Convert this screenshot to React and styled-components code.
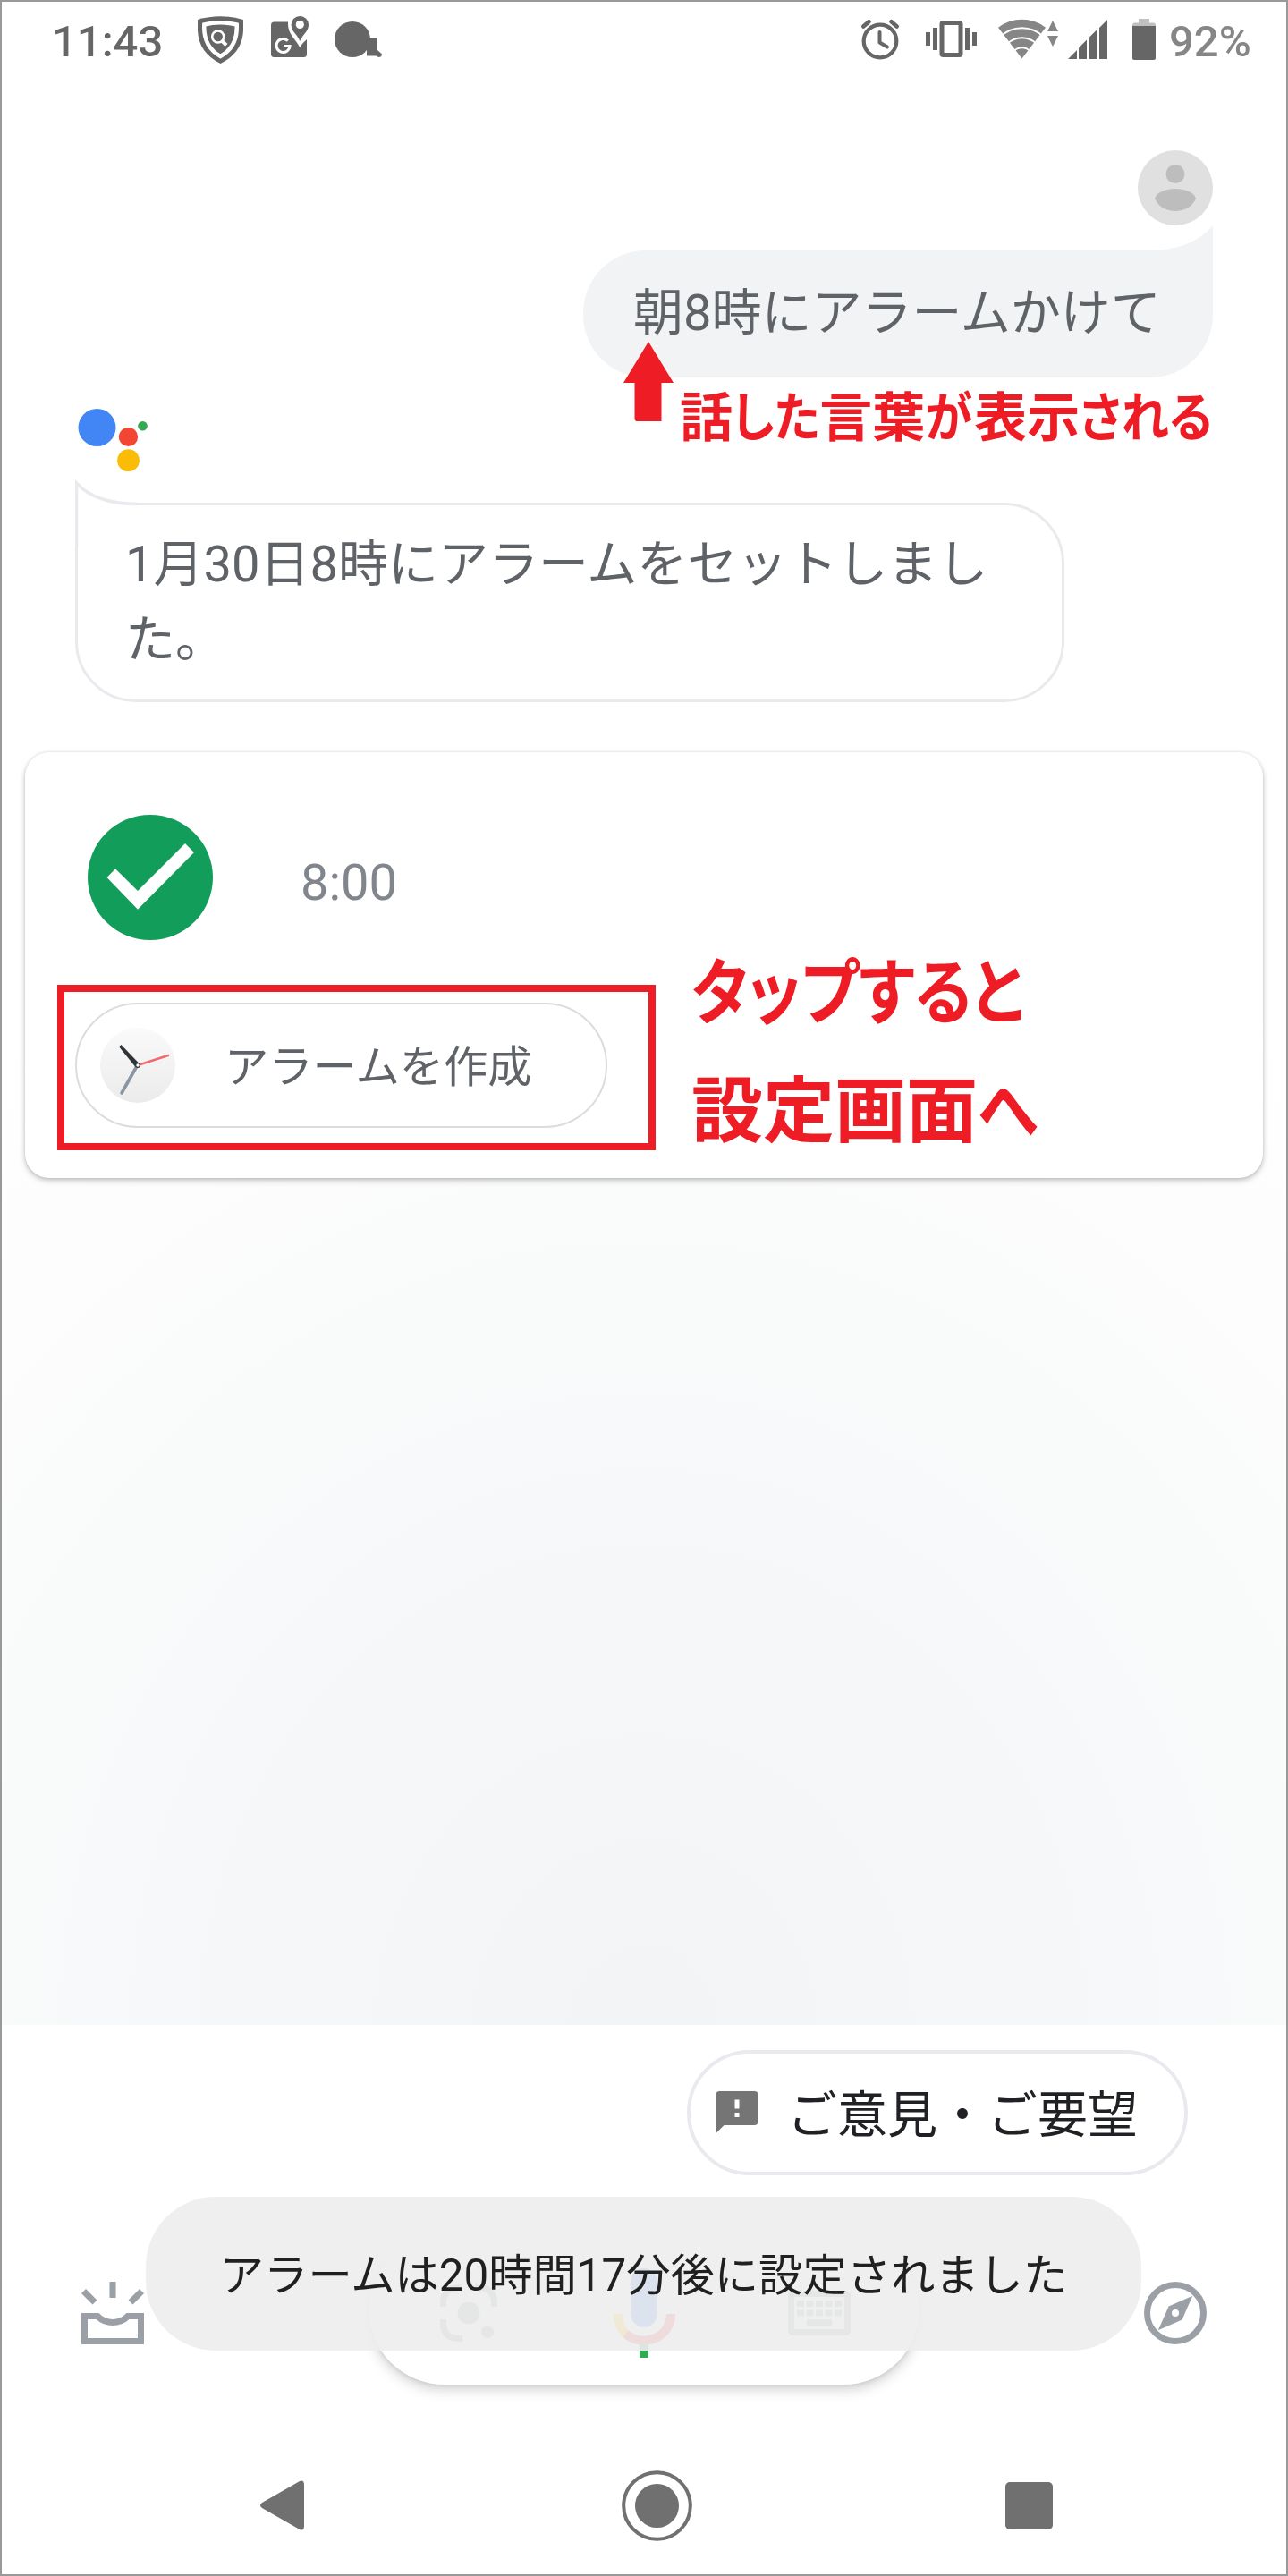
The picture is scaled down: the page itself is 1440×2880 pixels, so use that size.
import React from "react";
import styled, { createGlobalStyle } from "styled-components";

const GlobalStyle = createGlobalStyle`
    * {
        box-sizing: border-box;
    }

    body {
        margin: 0;
        background-color: #fff;
        font-family: Roboto, "Noto Sans CJK JP", sans-serif;
    }

    svg {
        display: block;
        flex-shrink: 0;
    }
`;

const Screen = styled.div`
    position: relative;
    display: flex;
    flex-direction: column;
    width: 1440px;
    height: 2880px;
    border: 2px solid #999;
    background-color: #fff;
    overflow: hidden;
`;

const StatusBar = styled.header`
    display: flex;
    align-items: center;
    justify-content: space-between;
    height: 88px;
    padding: 0 39px 0 56px;
`;

const StatusGroup = styled.div`
    display: flex;
    align-items: center;
`;

const StatusText = styled.span`
    width: ${({ $width }) => $width}px;
    padding-top: 1px;
    font-size: 49px;
    line-height: 60px;
    font-weight: 500;
    color: ${({ $color }) => $color};
    white-space: nowrap;
`;

const Spacer = styled.span`
    width: ${({ $width }) => $width}px;
`;

const Feed = styled.main`
    display: flex;
    flex-direction: column;
    flex: 0 0 2174px;
    background: radial-gradient(ellipse 1250px 1350px at 50% 100%, #f3f4f6 0%, #f6f7f9 35%, #f9fafa 60%, #fdfdfd 85%, #fff 100%);
`;

const UserTurn = styled.div`
    display: flex;
    flex-direction: column;
    align-items: flex-end;
    gap: 28px;
    padding: 78px 82px 0 0;
`;

const UserBubble = styled.div`
    position: relative;
    width: 704px;
    height: 142px;
    padding-left: 56px;
    border-radius: 70px 0 70px 70px;
    background-color: #f1f3f4;
    color: #5f6368;
    font-size: 56px;
    line-height: 140px;
    white-space: nowrap;
`;

const UserTail = styled.svg`
    position: absolute;
    right: 0;
    top: -28px;
`;

const AssistantTurn = styled.div`
    display: flex;
    flex-direction: column;
    align-items: flex-start;
    padding: 33px 0 0 82px;
`;

const AssistantBubble = styled.div`
    position: relative;
    width: 1106px;
    height: 223px;
    margin-top: 32px;
    padding: 24px 53px;
    border: 3px solid #e8eaed;
    border-radius: 0 68px 68px 68px;
    background-color: #fff;
    color: #5f6368;
    font-size: 56px;
    line-height: 84px;
`;

const AssistantTail = styled.svg`
    position: absolute;
    left: -3px;
    top: -33px;
`;

const Card = styled.section`
    position: relative;
    display: flex;
    flex-direction: column;
    align-items: flex-start;
    height: 476px;
    margin: 56px 26px 0;
    padding: 70px 0 0 56px;
    border-radius: 27px;
    background-color: #fff;
    box-shadow: 0 3px 6px rgba(60, 64, 67, 0.3), 0 0 3px rgba(60, 64, 67, 0.15);
`;

const AlarmRow = styled.div`
    display: flex;
    align-items: center;
    gap: 98px;
    height: 140px;
    padding-left: 14px;
    color: #80868b;
    font-size: 56px;
    line-height: 64px;
`;

const AlarmTime = styled.span`
    padding-top: 11px;
`;

const CreateButton = styled.button`
    display: flex;
    align-items: center;
    gap: 55px;
    width: 595px;
    height: 140px;
    margin-top: 70px;
    padding: 0 0 0 26px;
    border: 2px solid #dadce0;
    border-radius: 70px;
    background-color: #fff;
    color: #5f6368;
    font-family: inherit;
    font-size: 49.3px;
    line-height: 70px;
`;

const ButtonLabel = styled.span`
    padding-top: ${({ $drop }) => $drop}px;
`;

const Footer = styled.footer`
    display: flex;
    flex-direction: column;
    padding-top: 28px;
    background-color: #fff;
`;

const FeedbackChip = styled.button`
    display: flex;
    align-items: center;
    align-self: flex-end;
    gap: 32px;
    width: 560px;
    height: 140px;
    margin-right: 110px;
    padding: 0 0 0 28px;
    border: 4px solid #e8eaed;
    border-radius: 70px;
    background-color: #fff;
    color: #202124;
    font-family: inherit;
    font-size: 56px;
    line-height: 80px;
    white-space: nowrap;
`;

const Dock = styled.div`
    position: relative;
    display: flex;
    align-items: center;
    justify-content: space-between;
    height: 169px;
    margin-top: 65px;
    padding: 0 89px;
`;

const DockInput = styled.div`
    display: flex;
    align-items: center;
    justify-content: space-between;
    width: 616px;
    height: 169px;
    padding: 8px 77px 0 80px;
    border-radius: 85px;
    background-color: #fff;
    box-shadow: 0 6px 14px rgba(60, 64, 67, 0.22), 0 1px 4px rgba(60, 64, 67, 0.14);
`;

const DockIcon = styled.svg`
    margin-top: 9px;
`;

const Toast = styled.div`
    position: absolute;
    left: 161px;
    top: -41px;
    width: 1113px;
    height: 172px;
    border-radius: 78px;
    background-color: rgba(237, 237, 237, 0.9);
    color: #202020;
    font-size: 49.3px;
    line-height: 177px;
    text-align: center;
    white-space: nowrap;
`;

const NavBar = styled.nav`
    display: grid;
    grid-template-columns: 404px 429px auto;
    align-items: center;
    justify-content: start;
    height: 154px;
    margin-top: 58px;
    padding-left: 289px;
`;

const Arrow = styled.svg`
    position: absolute;
    left: 695px;
    top: 380px;
`;

const Note = styled.p`
    position: absolute;
    left: ${({ $left }) => $left}px;
    top: ${({ $top }) => $top}px;
    margin: 0;
    color: #ee1c24;
    font-family: "Noto Sans CJK JP", sans-serif;
    font-weight: 700;
    font-size: ${({ $size }) => $size}px;
    line-height: ${({ $line }) => $line}px;
    white-space: nowrap;
`;

// kana in the notes are narrower than the kanji
const Kana = styled.span`
    display: inline-block;
    margin-right: ${({ $pull }) => -($pull || 0)}px;
    font-feature-settings: "palt";
    transform: scaleX(${({ $scale }) => $scale || 0.9});
    transform-origin: 0 50%;
`;

const Highlight = styled.div`
    position: absolute;
    left: 36px;
    top: 260px;
    width: 669px;
    height: 185px;
    border: 8px solid #ee1c24;
    pointer-events: none;
`;

const ShieldIcon = () => (
    <svg width="60" height="60" viewBox="216 16 60 60">
        <path d="M221 22Q246 14.500 272 22V34Q271 59 246.500 71Q222 59 221 34Z" fill="#666" />
        <path d="M228.300 27.500Q246 23 264.700 27.500Q266 52 246.500 63Q227 52 228.300 27.500Z" fill="#666" stroke="#fff" strokeWidth="4.500" />
        <circle cx="243.700" cy="41" r="6.500" fill="none" stroke="#fff" strokeWidth="2.600" />
        <path d="M248 45.500L253 50.500" stroke="#fff" strokeWidth="4" />
    </svg>
);

const MapsIcon = () => (
    <svg width="50" height="60" viewBox="300 16 50 60">
        <rect x="303" y="24.500" width="40" height="39.500" rx="3.500" fill="#666" />
        <path d="M322 16V27C322 38 330 43 335.300 53C338 48 341 46 344 43V16Z" fill="#fff" />
        <path d="M335.300 46C333 39 325.600 35 325.600 27.700A9.700 9.700 0 0 1 345 27.700C345 35 338 39 335.300 46Z" fill="#666" />
        <circle cx="335.300" cy="27.500" r="4.600" fill="#fff" />
        <path d="M321.800 45.600A7.500 7.500 0 1 0 324 51.500H317" fill="none" stroke="#fff" strokeWidth="3" />
    </svg>
);

const BubbleIcon = () => (
    <svg width="56" height="60" viewBox="372 16 56 60">
        <circle cx="394" cy="44" r="20" fill="#666" />
        <path d="M408 42.500H422V56L427 60.500Q427 64 423 64L421 62.500H410V52Z" fill="#666" />
    </svg>
);

const AlarmIcon = () => (
    <svg width="48" height="60" viewBox="960 16 48 60" fill="none" stroke="#666">
        <circle cx="984" cy="46" r="18.300" strokeWidth="4.200" />
        <path d="M983.500 36V47.500L992 52.500" strokeWidth="4" strokeLinecap="round" strokeLinejoin="round" />
        <path d="M965.300 29.500L971.500 24.200M1002.700 29.500L996.500 24.200" strokeWidth="4.600" strokeLinecap="round" />
    </svg>
);

const VibrateIcon = () => (
    <svg width="60" height="60" viewBox="1034 16 60 60" fill="#666">
        <path d="M1035 36h5v15h-5zM1043 31h5v25h-5zM1079 31h5v25h-5zM1087 36h5v15h-5z" />
        <rect x="1053" y="25.500" width="21" height="36" rx="1.500" fill="none" stroke="#666" strokeWidth="5" />
    </svg>
);

const WifiIcon = () => (
    <svg width="72" height="60" viewBox="1114 16 72 60" fill="#868686">
        <path d="M1142.500 65.500L1116 30.700A44 44 0 0 1 1169 30.700Z" />
        <g fill="none" stroke="#fff" strokeWidth="1.900">
            <circle cx="1142.500" cy="65.500" r="34.300" />
            <circle cx="1142.500" cy="65.500" r="23.300" />
            <circle cx="1142.500" cy="65.500" r="12.300" />
        </g>
        <path d="M1171 35L1177 23L1183 35ZM1171 40H1183L1177 52Z" />
    </svg>
);

const SignalIcon = () => (
    <svg width="48" height="60" viewBox="1192 16 48 60" fill="#666">
        <path d="M1194 66L1204 56V66ZM1206 66V53.500L1215 44.500V66ZM1217.500 66V42L1226.500 33V66ZM1229 66V31L1238 22V66Z" />
    </svg>
);

const BatteryIcon = () => (
    <svg width="30" height="60" viewBox="1264 16 30 60">
        <path d="M1273 21H1285V25.500H1290Q1292 25.500 1292 28V30H1266V28Q1266 25.500 1268 25.500H1273Z" fill="#c0c0c2" />
        <path d="M1266 29H1292V65Q1292 67 1290 67H1268Q1266 67 1266 65Z" fill="#666" />
    </svg>
);

const Avatar = () => (
    <svg width="84" height="84" viewBox="0 0 84 84">
        <circle cx="42" cy="42" r="42" fill="#e0e0e0" />
        <circle cx="42" cy="26.500" r="10.500" fill="#bdbdbd" />
        <path d="M19 54C21 47 31 43 42 43S63 47 65 54C61 63 52 68 42 68S23 63 19 54Z" fill="#bdbdbd" />
    </svg>
);

const AssistantLogo = () => (
    <svg width="86" height="75" viewBox="84 455 86 75">
        <circle cx="108.500" cy="478" r="21" fill="#4285f4" />
        <circle cx="143.500" cy="488.500" r="10.600" fill="#f44532" />
        <circle cx="159.500" cy="476.300" r="5.300" fill="#34a853" />
        <circle cx="143.500" cy="514.700" r="12.400" fill="#fbbc05" />
    </svg>
);

const CheckIcon = () => (
    <svg width="140" height="140" viewBox="98 911 140 140">
        <circle cx="168" cy="981" r="70" fill="#129e5a" />
        <path d="M119.500 981L129 971.300L154 996L207 943L217 953L154 1016.700Z" fill="#fff" />
    </svg>
);

const ClockIcon = () => (
    <svg width="84" height="84" viewBox="112 1149 84 84" strokeLinecap="round">
        <defs>
            <linearGradient id="face" x1="0" y1="0" x2="0" y2="1">
                <stop offset="0" stopColor="#fafafa" />
                <stop offset="1" stopColor="#ebebec" />
            </linearGradient>
        </defs>
        <circle cx="154" cy="1191" r="42" fill="url(#face)" />
        <path d="M153 1192L136 1222" stroke="#8796a2" strokeWidth="3.600" />
        <path d="M154 1191L188 1180" stroke="#f26a6e" strokeWidth="2.500" />
        <path d="M156 1189.500L135.500 1168L133 1170.200L151.500 1193Z" fill="#303437" />
        <circle cx="154" cy="1191" r="2.300" fill="#fff" stroke="#303437" strokeWidth="1.200" />
    </svg>
);

const FeedbackIcon = () => (
    <svg width="48" height="48" viewBox="0 0 48 48">
        <path d="M5 0H43Q48 0 48 5V33Q48 38 43 38H9.500L0 47.500V5Q0 0 5 0Z" fill="#757575" />
        <path d="M21.500 9.500h5v10h-5zM21.500 24h5v5h-5z" fill="#fff" />
    </svg>
);

const UpdatesIcon = () => (
    <DockIcon width="70" height="70" viewBox="0 0 70 70" fill="#9aa0a6">
        <path d="M31.500 0h7v18h-7zM0 13L5 8L17.500 20.500L12.500 25.500ZM70 13L65 8L52.500 20.500L57.500 25.500Z" />
        <path d="M0 35H19.500Q26 42 35 42T50.500 35H70V70H0ZM7 42V63H63V42H53.500Q46 49 35 49T16.500 42Z" fillRule="evenodd" />
    </DockIcon>
);

const LensIcon = () => (
    <svg width="64" height="64" viewBox="0 0 64 64" fill="none" stroke="#9aa0a6" strokeWidth="7">
        <path d="M3.500 25V21Q3.500 3.500 21 3.500H25M39 3.500H43Q60.500 3.500 60.500 21V25M3.500 39V43Q3.500 60.500 21 60.500H25" />
        <circle cx="32" cy="32" r="12.500" fill="#9aa0a6" stroke="none" />
        <circle cx="53" cy="53" r="7" fill="#9aa0a6" stroke="none" />
    </svg>
);

const MicIcon = () => (
    <svg width="72" height="100" viewBox="683 2535 72 100">
        <rect x="705.500" y="2535" width="29" height="66" rx="14.500" fill="#4285f4" />
        <path d="M690.500 2586Q691 2600 699.500 2608" fill="none" stroke="#fbbc04" strokeWidth="10" />
        <path d="M699.500 2608C717 2624 750 2614 750 2586" fill="none" stroke="#ea4335" strokeWidth="10" />
        <rect x="715" y="2620" width="10" height="15" fill="#34a853" />
    </svg>
);

const KeyboardIcon = () => (
    <svg width="70" height="50" viewBox="0 0 70 50" fill="#9aa0a6">
        <rect x="3.500" y="3.500" width="63" height="43" rx="2" fill="none" stroke="#9aa0a6" strokeWidth="7" />
        <path d="M10 11h8v7h-8zM20.500 11h8v7h-8zM31 11h8v7h-8zM41.500 11h8v7h-8zM52 11h8v7h-8z" />
        <path d="M10 21.500h8v7h-8zM20.500 21.500h8v7h-8zM31 21.500h8v7h-8zM41.500 21.500h8v7h-8zM52 21.500h8v7h-8zM21 32h28v7h-28z" />
    </svg>
);

const ExploreIcon = () => (
    <DockIcon width="70" height="70" viewBox="0 0 70 70">
        <circle cx="35" cy="35" r="31.500" fill="none" stroke="#9aa0a6" strokeWidth="7" />
        <path d="M54.300 15.800L42.500 42.500L15.800 54.300L27.600 27.600Z" fill="#9aa0a6" />
        <circle cx="35" cy="35" r="4" fill="#fff" />
    </DockIcon>
);

const App = () => {
    return (
        <>
            <GlobalStyle />
            <Screen>
                <StatusBar>
                    <StatusGroup>
                        <StatusText $width={158} $color="#666">11:43</StatusText>
                        <ShieldIcon />
                        <Spacer $width={24} />
                        <MapsIcon />
                        <Spacer $width={22} />
                        <BubbleIcon />
                    </StatusGroup>
                    <StatusGroup>
                        <AlarmIcon />
                        <Spacer $width={26} />
                        <VibrateIcon />
                        <Spacer $width={20} />
                        <WifiIcon />
                        <Spacer $width={6} />
                        <SignalIcon />
                        <Spacer $width={24} />
                        <BatteryIcon />
                        <Spacer $width={13} />
                        <StatusText $width={92} $color="#868686">92%</StatusText>
                    </StatusGroup>
                </StatusBar>

                <Feed>
                    <UserTurn>
                        <Avatar />
                        <UserBubble>
                            朝8時にアラームかけて
                            <UserTail width="71" height="29" viewBox="0 0 71 29">
                                <path d="M0 28Q47 28 71 0V29H0Z" fill="#f1f3f4" />
                            </UserTail>
                        </UserBubble>
                    </UserTurn>

                    <AssistantTurn>
                        <AssistantLogo />
                        <AssistantBubble>
                            <AssistantTail width="70" height="80" viewBox="84 532 70 80">
                                <path d="M84 538L88 541C101 555 122 563.500 154 563.500V612H84Z" fill="#fff" />
                                <path d="M85.500 612V540C100 556 122 563.500 154 563.500" fill="none" stroke="#e8eaed" strokeWidth="3.500" />
                            </AssistantTail>
                            1月30日8時にアラームをセットしまし
                            <br />
                            た。
                        </AssistantBubble>
                    </AssistantTurn>

                    <Card>
                        <AlarmRow>
                            <CheckIcon />
                            <AlarmTime>8:00</AlarmTime>
                        </AlarmRow>
                        <CreateButton type="button">
                            <ClockIcon />
                            <ButtonLabel $drop={4}>アラームを作成</ButtonLabel>
                        </CreateButton>
                        <Highlight />
                        <Note $left={745} $top={196} $size={80} $line={132}>
                            <Kana $scale={0.87}>タップすると</Kana>
                            <br />
                            設定画面<Kana $scale={0.86}>へ</Kana>
                        </Note>
                    </Card>
                </Feed>

                <Footer>
                    <FeedbackChip type="button">
                        <FeedbackIcon />
                        <ButtonLabel $drop={5}>ご意見・ご要望</ButtonLabel>
                    </FeedbackChip>
                    <Dock>
                        <UpdatesIcon />
                        <DockInput>
                            <LensIcon />
                            <MicIcon />
                            <KeyboardIcon />
                        </DockInput>
                        <ExploreIcon />
                        <Toast>アラームは20時間17分後に設定されました</Toast>
                    </Dock>
                </Footer>

                <NavBar>
                    <svg width="49" height="56" viewBox="0 0 49 56">
                        <path d="M2 25L44 1Q49 -1 49 5V51Q49 57 44 55L2 31Q-2 28 2 25Z" fill="#707070" />
                    </svg>
                    <svg width="79" height="79" viewBox="0 0 79 79">
                        <circle cx="39.500" cy="39.500" r="37.300" fill="none" stroke="#707070" strokeWidth="4" />
                        <circle cx="39.500" cy="39.500" r="24.500" fill="#707070" />
                    </svg>
                    <svg width="53" height="53" viewBox="0 0 53 53">
                        <rect width="53" height="53" rx="5" fill="#707070" />
                    </svg>
                </NavBar>

                <Arrow width="56" height="92" viewBox="697 382 56 92">
                    <path d="M725 382L753 428H739.500V471H711L709.500 469V428H697Z" fill="#ee1c24" />
                </Arrow>
                <Note $left={758} $top={416} $size={59} $line={90}>
                    話<Kana $pull={11}>した</Kana>言葉<Kana $pull={4}>が</Kana>表示<Kana>される</Kana>
                </Note>
            </Screen>
        </>
    );
};

export default App;
